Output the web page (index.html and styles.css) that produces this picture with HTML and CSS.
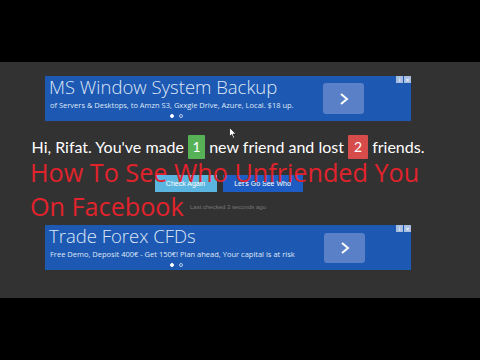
FILE: index.html
```html
<!DOCTYPE html>
<html>
<head>
<meta charset="utf-8">
<link rel="stylesheet" href="styles.css">
</head>
<body>
<div class="video">
  <div class="bar"></div>
  <div class="stage">
    <div class="column">
      <div class="ad">
        <div class="ad-text">
          <div class="ad-title">MS Window System Backup</div>
          <div class="ad-sub">of Servers &amp; Desktops, to Amzn S3, Gxxgle Drive, Azure, Local. $18 up.</div>
        </div>
        <div class="ad-go"><svg width="12" height="14" viewBox="0 0 12 14"><path d="M3 2 L9 7 L3 12" fill="none" stroke="#fff" stroke-width="2"/></svg></div>
        <div class="dots"><span class="dot on"></span><span class="dot"></span></div>
        <div class="choices"><span>i</span><span>×</span></div>
      </div>

      <p class="greeting">Hi, Rifat. You've made <span class="badge green">1</span> new friend and lost <span class="badge red">2</span> friends.</p>

      <div class="buttons">
        <span class="btn light">Check Again</span>
        <span class="btn dark">Let's Go See Who</span>
      </div>
      <div class="checked">Last checked 3 seconds ago</div>

      <div class="ad ad2">
        <div class="ad-text">
          <div class="ad-title">Trade Forex CFDs</div>
          <div class="ad-sub">Free Demo, Deposit 400€ - Get 150€! Plan ahead, Your capital is at risk</div>
        </div>
        <div class="ad-go"><svg width="12" height="14" viewBox="0 0 12 14"><path d="M3 2 L9 7 L3 12" fill="none" stroke="#fff" stroke-width="2"/></svg></div>
        <div class="dots"><span class="dot on"></span><span class="dot"></span></div>
        <div class="choices"><span>i</span><span>×</span></div>
      </div>
    </div>
    <div class="caption">How To See Who Unfriended You<br>On Facebook</div>
    <svg class="cursor" width="8" height="12" viewBox="0 0 8 12"><path d="M0.5 0.5 L0.5 9.5 L2.6 7.6 L4.2 11.2 L5.6 10.6 L4 7.1 L7 7.1 Z" fill="#fff" stroke="#222" stroke-width="0.8"/></svg>
  </div>
  <div class="bar bottom"></div>
</div>
</body>
</html>
```

FILE: styles.css
```css
html, body {
  margin: 0;
  padding: 0;
  background: #000;
}
.video {
  width: 480px;
  height: 360px;
  display: flex;
  flex-direction: column;
  overflow: hidden;
}
.bar {
  height: 62px;
  background: #000;
  flex: none;
}
.stage {
  position: relative;
  height: 236px;
  background: #333232;
  flex: none;
}
.column {
  width: 390px;
  margin-left: 33px;
  padding-top: 14px;
  display: flex;
  flex-direction: column;
  align-items: center;
}
.ad {
  position: relative;
  width: 366px;
  height: 45px;
  background: #1d58b2;
  box-sizing: border-box;
  padding-left: 4px;
  display: flex;
  font-family: "Open Sans", sans-serif;
  color: #dfe8f7;
}
.ad-text {
  flex: 1;
}
.ad-title {
  font-size: 18.5px;
  font-weight: 300;
  line-height: 20px;
  margin-top: 1px;
  white-space: nowrap;
}
.ad-sub {
  font-size: 7.5px;
  line-height: 10px;
  margin-top: 3px;
  padding-left: 1px;
  white-space: nowrap;
}
.ad-go {
  position: absolute;
  left: 278px;
  top: 7px;
  width: 41px;
  height: 31px;
  background: #5a80c8;
  border-radius: 3px;
  display: flex;
  align-items: center;
  justify-content: center;
}
.ad2 .ad-go {
  left: 279px;
  top: 8px;
  height: 30px;
}
.dots {
  position: absolute;
  left: 125px;
  top: 38px;
  display: flex;
  gap: 5px;
}
.dot {
  width: 4px;
  height: 4px;
  border-radius: 50%;
  border: 1px solid #b9cbe9;
  box-sizing: border-box;
}
.dot.on {
  background: #fff;
  border-color: #fff;
}
.choices {
  position: absolute;
  right: 0;
  top: 0;
  display: flex;
  gap: 1px;
}
.choices span {
  width: 7px;
  height: 7px;
  background: #a7bde0;
  color: #fff;
  font-family: "DejaVu Sans", sans-serif;
  font-size: 6px;
  line-height: 7px;
  text-align: center;
}
.greeting {
  margin: 14px 0 0;
  font-family: Lato, sans-serif;
  font-size: 16px;
  line-height: 24px;
  color: #fff;
  white-space: nowrap;
}
.badge {
  display: inline-block;
  height: 24px;
  color: #fff;
  text-align: center;
  vertical-align: top;
  font-size: 14px;
  line-height: 24px;
  border-radius: 1px;
}
.green {
  width: 17px;
  background: #57b157;
}
.red {
  width: 20px;
  background: #d64c4a;
}
.buttons {
  margin-top: 16px;
  display: flex;
  gap: 6px;
  margin-left: 1px;
}
.btn {
  height: 17px;
  font-family: "Liberation Sans", Arial, sans-serif;
  font-size: 7px;
  line-height: 17px;
  color: #fff;
  text-align: center;
}
.light {
  width: 62px;
  background: #5ab6e0;
}
.dark {
  width: 80px;
  background: #1d5cc2;
}
.checked {
  margin-top: 10px;
  font-family: "Liberation Sans", Arial, sans-serif;
  font-size: 6px;
  line-height: 10px;
  color: #777;
}
.ad2 {
  margin-top: 13px;
}
.caption {
  position: absolute;
  left: 30px;
  top: 93px;
  font-family: "Open Sans", sans-serif;
  font-size: 25.2px;
  line-height: 34px;
  color: #e0232c;
  white-space: nowrap;
}
.cursor {
  position: absolute;
  left: 229px;
  top: 65px;
}
```
